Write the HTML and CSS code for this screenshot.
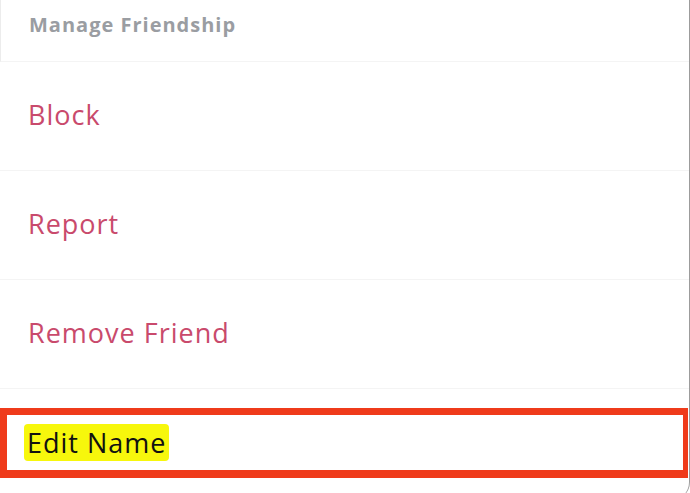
FILE: index.html
```html
<!DOCTYPE html>
<html lang="en">
	<head>
		<link rel="stylesheet" href="styles.css">
	</head>
	<body>
		<div class="sheet">
			<div class="head">Manage Friendship</div>
			<div class="row">Block</div>
			<div class="row">Report</div>
			<div class="row">Remove Friend</div>
			<div class="row last">
				<div class="mark"><span class="hl">Edit Name</span></div>
			</div>
		</div>
	</body>
</html>
```

FILE: styles.css
```css
html, body { margin:0; padding:0; background:#fff; overflow:hidden; }
body { width:690px; height:493px; font-family:"Open Sans", "Noto Sans", sans-serif; }

.sheet { width:689px; height:500px; border-right:1px solid #9c9c9c; border-bottom-right-radius:18px; background:#fff; }

.head { height:62px; box-sizing:border-box; border-left:1px solid #ececec; border-bottom:1px solid #f4f4f4; padding:0 0 12px 28px; display:flex; align-items:center; font-weight:700; font-size:20px; letter-spacing:1px; color:#9a9da2; }

.row { height:109px; box-sizing:border-box; border-bottom:1px solid #f4f4f4; display:flex; align-items:center; padding:0 0 3px 28px; font-size:27px; letter-spacing:1px; color:#c94a6c; }
.row.last { border-bottom:none; padding:19px 0 0 0; align-items:flex-start; }

.mark { width:688px; height:70px; box-sizing:border-box; border:7px solid #ef3b1b; border-right-width:5px; border-bottom-width:8px; display:flex; align-items:center; padding-left:17px; }
.hl { background:#f7f70c; color:#111; padding:0 3px; border-radius:4px; }
```
